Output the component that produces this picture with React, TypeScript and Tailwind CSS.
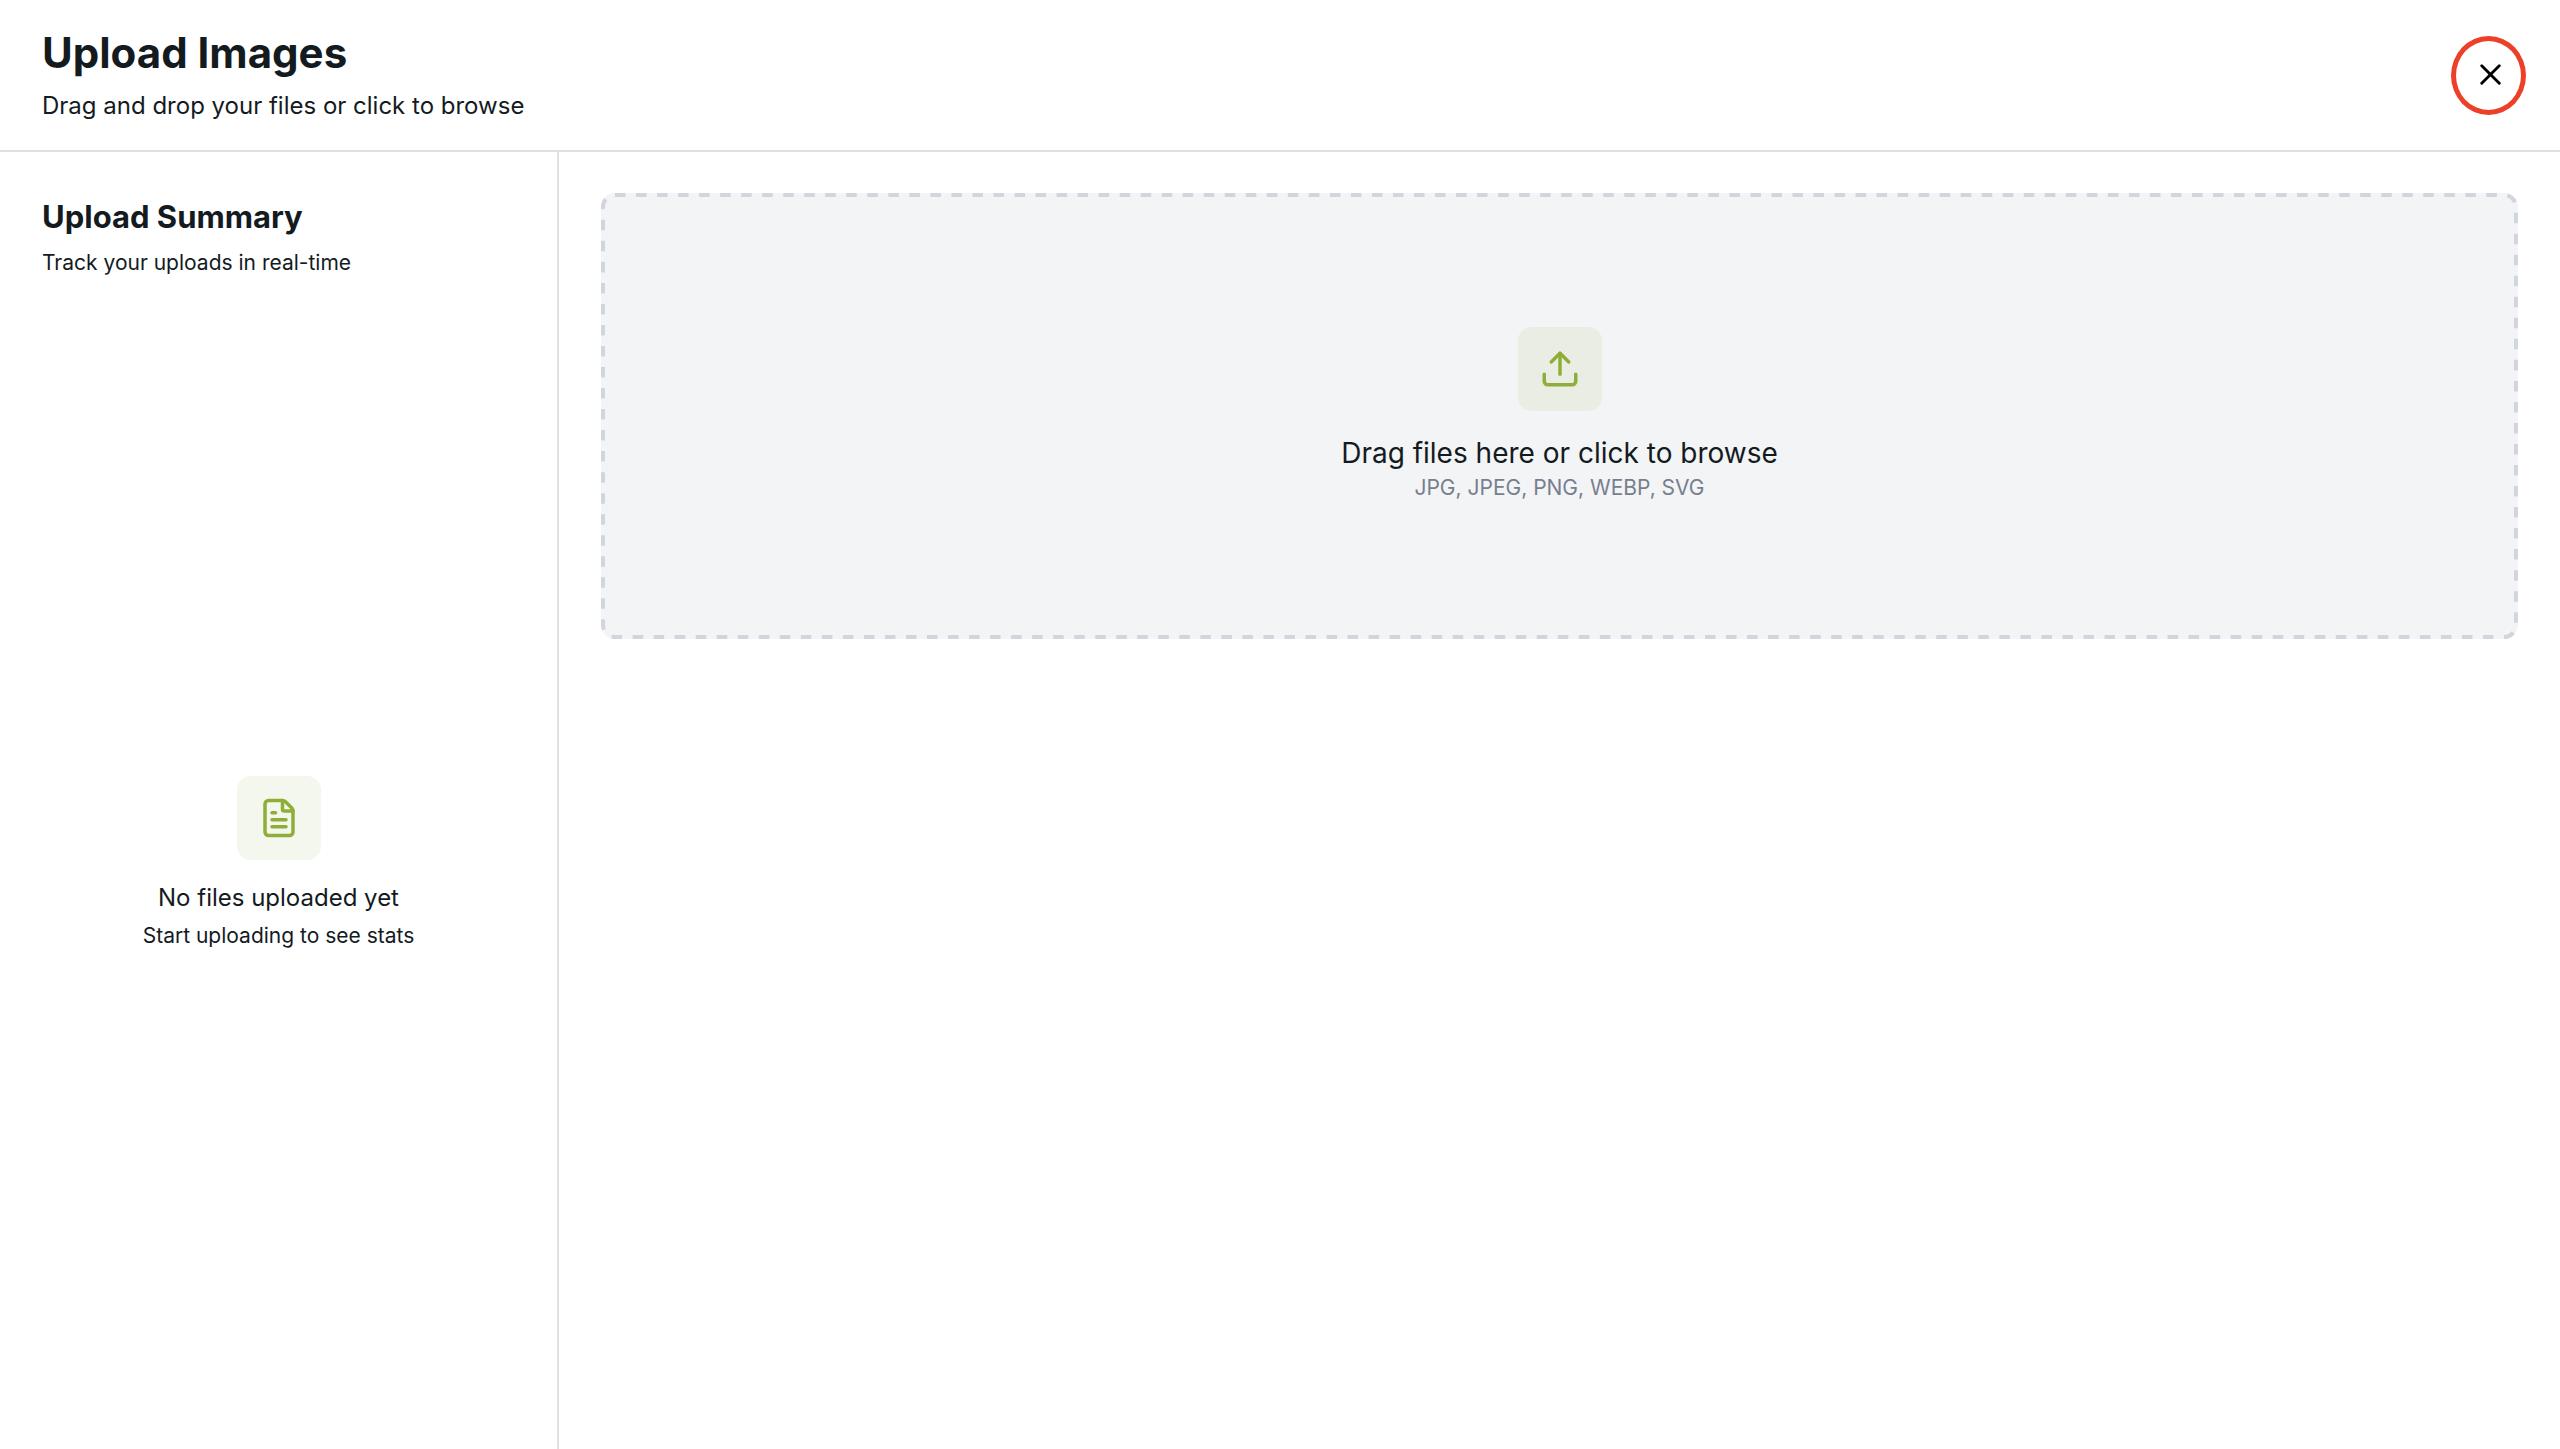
import { FileText, Upload, X } from "lucide-react";

export default function App() {
  return (
    <div className="flex h-screen flex-col bg-white font-['Inter',sans-serif] text-[#141b1f]">
      <header className="flex items-center justify-between border-b-2 border-[#e0e0e0] px-[42px] pt-[28px] pb-[26px]">
        <div>
          <h1 className="text-[42px] leading-[50px] font-bold">Upload Images</h1>
          <p className="mt-[10px] text-[24px] leading-[36px]">
            Drag and drop your files or click to browse
          </p>
        </div>
        <button
          type="button"
          aria-label="Close"
          className="relative mb-1 flex size-[56px] items-center justify-center text-black"
        >
          <X size={35} strokeWidth={2} />
          <span className="absolute -top-[10px] -right-[8px] -bottom-[13px] -left-[11px] rounded-[50%] border-5 border-[#ec4128]" />
        </button>
      </header>

      <div className="flex min-h-0 flex-1">
        <aside className="flex w-[559px] shrink-0 flex-col border-r-2 border-[#e0e0e0] px-[42px] pt-[42px]">
          <h2 className="text-[31px] leading-[46px] font-bold">Upload Summary</h2>
          <p className="mt-[7px] text-[21px] leading-[32px]">Track your uploads in real-time</p>
          <div className="flex flex-1 flex-col items-center justify-center text-center">
            <div className="flex size-[84px] items-center justify-center rounded-[14px] bg-[#f4f7ed] text-[#8fae37]">
              <FileText size={42} strokeWidth={2} />
            </div>
            <p className="mt-[20px] text-[24px] leading-[36px]">No files uploaded yet</p>
            <p className="mt-[4px] text-[21px] leading-[32px]">Start uploading to see stats</p>
          </div>
        </aside>

        <main className="flex-1 px-[42px] py-[41px]">
          <button
            type="button"
            className="relative flex h-[446px] w-full flex-col items-center justify-center rounded-[14px] bg-[#f2f4f6] pb-[4px]"
          >
            <svg className="absolute inset-0 size-full" fill="none" aria-hidden="true">
              <rect
                x="2"
                y="2"
                rx="12"
                pathLength={446}
                className="h-[calc(100%-4px)] w-[calc(100%-4px)] stroke-[#d2d5dd] [stroke-dasharray:1_1] [stroke-width:4px]"
              />
            </svg>
            <span className="flex size-[84px] items-center justify-center rounded-[14px] bg-[#e9ede3] text-[#8fae37]">
              <Upload size={42} strokeWidth={2} />
            </span>
            <span className="mt-[21px] text-[28px] leading-[42px]">
              Drag files here or click to browse
            </span>
            <span className="text-[21px] leading-[28px] text-[#777e8f]">
              JPG, JPEG, PNG, WEBP, SVG
            </span>
          </button>
        </main>
      </div>
    </div>
  );
}
